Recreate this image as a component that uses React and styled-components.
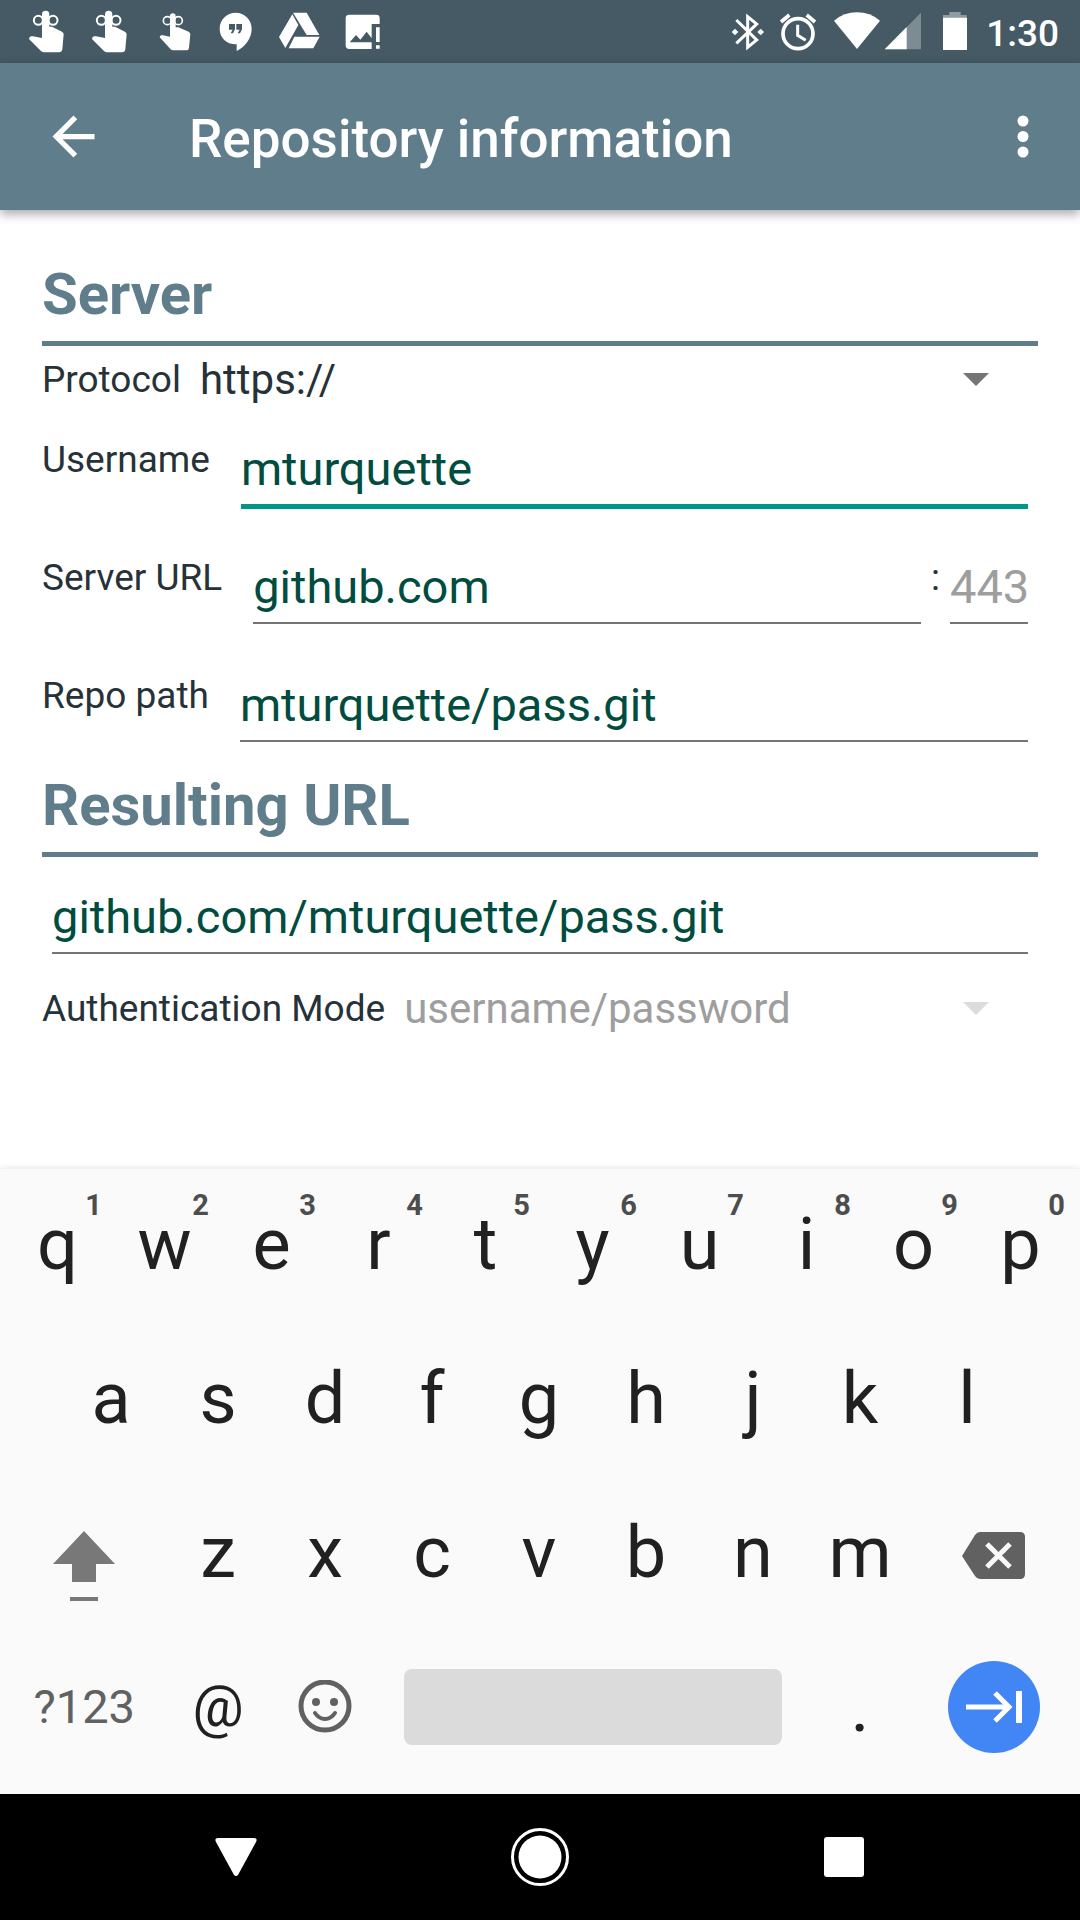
import React, { useState } from "react";
import styled, { createGlobalStyle, css } from "styled-components";

const color = {
  statusBar: "#455a64",
  primary: "#607d8b",
  text: "#263238",
  input: "#004d40",
  accent: "#009688",
  line: "#757575",
  hint: "#9e9e9e",
  key: "#212121",
  keyMuted: "#616161",
};

const GlobalStyle = createGlobalStyle`
  *, *::before, *::after { box-sizing: border-box; }
  body {
    margin: 0;
    background: #fff;
    font-family: Roboto, "Liberation Sans", sans-serif;
    color: ${color.text};
  }
  button, input, select { font: inherit; color: inherit; }
`;

const bareControl = css`
  margin: 0;
  padding: 0;
  border: 0;
  background: none;
  appearance: none;
`;

const Screen = styled.div`
  display: flex;
  flex-direction: column;
  min-height: 100vh;
`;

/* ---------- status bar ---------- */

const StatusBar = styled.header`
  display: flex;
  justify-content: space-between;
  height: 63px;
  padding: 0 21px 0 15px;
  background: ${color.statusBar};
  color: #fff;
`;

const StatusGroup = styled.div`
  display: flex;
  align-items: center;
`;

const Clock = styled.time`
  padding: 4px 0 0 7px;
  font-size: 37px;
  line-height: 44px;
  font-weight: 500;
`;

const StatusIcon = ({ x, w, children }) => (
  <svg
    width={w / 3}
    height="63"
    viewBox={`${x} 0 ${w} 189`}
    fill="currentColor"
    aria-hidden="true"
  >
    {children}
  </svg>
);

const ReminderHand = () => (
  <>
    <circle cx="115" cy="61" r="13.5" fill="none" stroke="currentColor" strokeWidth="6" />
    <circle cx="159" cy="61" r="13.5" fill="none" stroke="currentColor" strokeWidth="6" />
    <path d="M126 43a11 11 0 0 1 22 0v37h8l30 15q5 3 5 8l-4 45q-1 9-10 9h-45q-5 0-9-4L87 117q0-6 6-8 3-1 6 0l27 5z" />
  </>
);

/* ---------- app bar ---------- */

const AppBar = styled.div`
  display: flex;
  align-items: center;
  height: 147px;
  padding: 0 31px 0 42px;
  background: ${color.primary};
  color: #fff;
  box-shadow: 0 4px 10px rgba(0, 0, 0, 0.35);
`;

const BarButton = styled.button`
  ${bareControl}
  display: flex;
  flex: none;
`;

const Title = styled.h1`
  flex: 1;
  margin: 0;
  padding: 4px 0 0 84px;
  font-size: 53px;
  line-height: 62px;
  font-weight: 500;
`;

/* ---------- form ---------- */

const Form = styled.form`
  flex: 1;
  padding: 50px 42px;
`;

const SectionTitle = styled.h2`
  margin: 0;
  padding-bottom: 13px;
  border-bottom: 5px solid ${color.primary};
  font-size: 58px;
  line-height: 68px;
  font-weight: 700;
  color: ${color.primary};
`;

const Section = styled.section`
  & + & {
    margin-top: 29px;
  }
`;

const Label = styled.label`
  flex: none;
  font-size: 37px;
  line-height: 46px;
`;

const SelectRow = styled.div`
  display: flex;
  align-items: flex-start;
  gap: 19px;
  padding-top: 8px;

  ${Label} {
    padding-top: 3px;
  }
`;

const SelectBox = styled.div`
  display: flex;
  flex: 1;
  align-items: center;
  padding-right: 49px;
  color: ${(p) => (p.$disabled ? "#dcdcdc" : color.line)};
`;

const Select = styled.select`
  ${bareControl}
  flex: 1;
  min-width: 0;
  height: 50px;
  padding-top: 2px;
  font-size: 42px;
  line-height: 48px;
  color: ${color.text};
  outline: none;

  &:disabled {
    color: ${color.hint};
    opacity: 1;
  }
`;

const Fields = styled.div`
  display: flex;
  flex-direction: column;
  gap: 49px;
  padding-top: 33px;
`;

const FieldRow = styled.div`
  display: flex;
  align-items: flex-start;
  padding-right: 10px;
`;

const TextInput = styled.input`
  ${bareControl}
  flex: ${(p) => (p.$width ? "none" : "1")};
  width: ${(p) => (p.$width ? `${p.$width}px` : "auto")};
  min-width: 0;
  height: 69px;
  margin-left: ${(p) => p.$gap}px;
  padding: 3px 0 8px;
  border-bottom: 2px solid ${(p) => (p.$active ? color.accent : color.line)};
  box-shadow: ${(p) => (p.$active ? `0 3px 0 ${color.accent}` : "none")};
  font-size: 47px;
  line-height: 56px;
  color: ${color.input};
  outline: none;

  &::placeholder {
    color: ${color.hint};
    opacity: 1;
  }
`;

const Colon = styled.span`
  margin-left: 10px;
  font-size: 37px;
  line-height: 46px;
`;

const ResultRow = styled.div`
  display: flex;
  padding: 28px 10px 21px 0;
`;

const Arrow = () => (
  <svg width="26" height="13" viewBox="0 0 26 13" fill="currentColor" aria-hidden="true">
    <path d="M0 0h26L13 13z" />
  </svg>
);

/* ---------- keyboard ---------- */

const Keyboard = styled.section`
  padding: 2px 6px 7px 4px;
  background: #fafafa;
  color: ${color.key};
  box-shadow: 0 -1px 6px rgba(0, 0, 0, 0.1);
`;

const KeyRow = styled.div`
  display: flex;
  height: 154px;
  justify-content: center;
`;

const Key = styled.button`
  ${bareControl}
  position: relative;
  display: flex;
  flex: 0 0 ${(p) => p.$span || 10}%;
  align-items: center;
  justify-content: center;
  padding-bottom: 6px;
  font-size: ${(p) => p.$size || 72}px;
  line-height: 84px;
  color: ${(p) => (p.$muted ? color.keyMuted : color.key)};
`;

const Hint = styled.span`
  position: absolute;
  top: 17px;
  right: 9px;
  font-size: 29px;
  line-height: 34px;
  font-weight: 700;
  color: #4d4d4d;
`;

const SpaceBar = styled.span`
  width: 378px;
  height: 76px;
  border-radius: 8px;
  background: #dbdbdb;
`;

const NextCircle = styled.span`
  display: flex;
  align-items: center;
  justify-content: center;
  width: 92px;
  height: 92px;
  border-radius: 50%;
  background: #4285f4;
`;

/* ---------- navigation bar ---------- */

const NavBar = styled.nav`
  display: flex;
  align-items: center;
  justify-content: center;
  gap: 244px;
  height: 126px;
  background: #000;
  color: #fff;
`;

const topRow = ["q", "w", "e", "r", "t", "y", "u", "i", "o", "p"];
const homeRow = ["a", "s", "d", "f", "g", "h", "j", "k", "l"];
const bottomRow = ["z", "x", "c", "v", "b", "n", "m"];

export default function App() {
  const [username, setUsername] = useState("mturquette");
  const [server, setServer] = useState("github.com");
  const [path, setPath] = useState("mturquette/pass.git");
  const [port, setPort] = useState("");
  const [url, setUrl] = useState("github.com/mturquette/pass.git");

  return (
    <Screen>
      <GlobalStyle />
      <StatusBar>
        <StatusGroup>
          <StatusIcon x={45} w={189}>
            <ReminderHand />
          </StatusIcon>
          <StatusIcon x={45} w={189}>
            <ReminderHand />
          </StatusIcon>
          <StatusIcon x={423} w={189}>
            <circle cx="502" cy="62" r="12" fill="none" stroke="currentColor" strokeWidth="5" />
            <circle cx="535" cy="62" r="12" fill="none" stroke="currentColor" strokeWidth="5" />
            <path d="M510 48a8.500 8.500 0 0 1 17 0v34h8l31 13q5 3 5 8l-4 40q-1 8-9 8h-38q-5 0-8-3l-33-36q0-5 5-6h5l21 4z" />
          </StatusIcon>
          <StatusIcon x={612} w={189}>
            <path
              fillRule="evenodd"
              d="M707 38c27 0 48 21 48 48 0 30-20 54-45 67v-20c-30 1-51-20-51-47s21-48 48-48zM687 72v17h11l-6 11h7l6-12V72zm22 0v17h10l-6 11h7l6-12V72z"
            />
          </StatusIcon>
          <StatusIcon x={801} w={189}>
            <path d="M879 38h41l38 67h-38zM877 43l18 32-39 69-19-33zM883 110h76l-19 35h-74z" />
          </StatusIcon>
          <StatusIcon x={990} w={189}>
            <path
              fillRule="evenodd"
              d="M1048 44h81q10 0 10 10v18h-24v75h-67q-11 0-11-11V54q0-10 11-10zM1049 127h66v-12l-15-20-19 24-13-14z"
            />
            <path d="M1128 82h11v44h-11zM1128 136h11v10h-11z" />
          </StatusIcon>
        </StatusGroup>
        <StatusGroup>
          <StatusIcon x={69} w={150}>
            <g fill="none" stroke="currentColor" strokeWidth="9">
              <path d="M109 60l61 60-27 22V50l27 22-61 58" />
            </g>
            <path d="M95 96l10-10 10 10-10 10zM172 96l10-10 10 10-10 10z" />
          </StatusIcon>
          <StatusIcon x={219} w={150}>
            <g fill="none" stroke="currentColor">
              <circle cx="294" cy="101" r="45" strokeWidth="11" />
              <path d="M293 74v32l24 15" strokeWidth="9" />
              <path d="M243 66l25-21M345 66l-25-21" strokeWidth="11" />
            </g>
          </StatusIcon>
          <StatusIcon x={369} w={180}>
            <path d="M402 62q30-25 69-25t69 25l-69 85z" />
          </StatusIcon>
          <StatusIcon x={549} w={144}>
            <path d="M663 38v110H554z" opacity="0.3" />
            <path d="M620 81v67h-66z" />
          </StatusIcon>
          <StatusIcon x={693} w={144}>
            <path d="M748 36h34v9h18v8h-71v-8h19z" opacity="0.4" />
            <path d="M729 53h72v97h-72z" />
          </StatusIcon>
          <Clock>1:30</Clock>
        </StatusGroup>
      </StatusBar>

      <AppBar>
        <BarButton type="button" aria-label="Back">
          <svg width="63" height="63" viewBox="0 0 24 24" fill="#fff">
            <path d="M20 11H7.830l5.590-5.590L12 4l-8 8 8 8 1.410-1.410L7.830 13H20z" />
          </svg>
        </BarButton>
        <Title>Repository information</Title>
        <BarButton type="button" aria-label="More options">
          <svg width="52" height="63" viewBox="0 0 52 63" fill="#fff">
            <circle cx="26" cy="16" r="5.500" />
            <circle cx="26" cy="31.500" r="5.500" />
            <circle cx="26" cy="47" r="5.500" />
          </svg>
        </BarButton>
      </AppBar>

      <Form>
        <Section>
          <SectionTitle>Server</SectionTitle>
          <SelectRow>
            <Label htmlFor="protocol">Protocol</Label>
            <SelectBox>
              <Select id="protocol" defaultValue="https">
                <option value="https">https://</option>
                <option value="ssh">ssh://</option>
              </Select>
              <Arrow />
            </SelectBox>
          </SelectRow>
          <Fields>
            <FieldRow>
              <Label htmlFor="username">Username</Label>
              <TextInput
                id="username"
                $gap={31}
                $active
                value={username}
                onChange={(e) => setUsername(e.target.value)}
              />
            </FieldRow>
            <FieldRow>
              <Label htmlFor="server">Server URL</Label>
              <TextInput
                id="server"
                $gap={31}
                value={server}
                onChange={(e) => setServer(e.target.value)}
              />
              <Colon>:</Colon>
              <TextInput
                aria-label="Port"
                $gap={10}
                $width={78}
                placeholder="443"
                value={port}
                onChange={(e) => setPort(e.target.value)}
              />
            </FieldRow>
            <FieldRow>
              <Label htmlFor="path">Repo path</Label>
              <TextInput
                id="path"
                $gap={31}
                value={path}
                onChange={(e) => setPath(e.target.value)}
              />
            </FieldRow>
          </Fields>
        </Section>

        <Section>
          <SectionTitle id="result-title">Resulting URL</SectionTitle>
          <ResultRow>
            <TextInput
              aria-labelledby="result-title"
              $gap={10}
              value={url}
              onChange={(e) => setUrl(e.target.value)}
            />
          </ResultRow>
          <SelectRow>
            <Label htmlFor="auth">Authentication Mode</Label>
            <SelectBox $disabled>
              <Select id="auth" disabled defaultValue="password">
                <option value="password">username/password</option>
              </Select>
              <Arrow />
            </SelectBox>
          </SelectRow>
        </Section>
      </Form>

      <Keyboard aria-label="Keyboard">
        <KeyRow>
          {topRow.map((letter, i) => (
            <Key type="button" key={letter}>
              {letter}
              <Hint>{(i + 1) % 10}</Hint>
            </Key>
          ))}
        </KeyRow>
        <KeyRow>
          {homeRow.map((letter) => (
            <Key type="button" key={letter}>
              {letter}
            </Key>
          ))}
        </KeyRow>
        <KeyRow>
          <Key type="button" $span={15} aria-label="Shift">
            <svg width="64" height="100" viewBox="0 0 64 100" fill="#787878">
              <path d="M32 28l31 33H44v18H20V61H1zM18 94h28v4H18z" />
            </svg>
          </Key>
          {bottomRow.map((letter) => (
            <Key type="button" key={letter}>
              {letter}
            </Key>
          ))}
          <Key type="button" $span={15} aria-label="Delete">
            <svg width="64" height="56" viewBox="0 1 64 56">
              <path
                d="M18 8h40q5 0 5 5v37q0 5-5 5H18q-3 0-5-3L0 32l13-21q2-3 5-3z"
                fill="#616161"
              />
              <path d="M25 20l23 23M48 20L25 43" stroke="#fafafa" strokeWidth="5" />
            </svg>
          </Key>
        </KeyRow>
        <KeyRow>
          <Key type="button" $span={15} $size={47} $muted>
            ?123
          </Key>
          <Key type="button" $size={57}>
            @
          </Key>
          <Key type="button" $muted aria-label="Emoji">
            <svg width="54" height="54" viewBox="0 1 54 54" fill="currentColor">
              <circle cx="27" cy="27" r="24" fill="none" stroke="currentColor" strokeWidth="5" />
              <circle cx="18" cy="23" r="4" />
              <circle cx="36" cy="23" r="4" />
              <path
                d="M17 34q4 6 10 6t10-6"
                fill="none"
                stroke="currentColor"
                strokeWidth="4"
                strokeLinecap="round"
              />
            </svg>
          </Key>
          <Key type="button" $span={40} aria-label="Space">
            <SpaceBar />
          </Key>
          <Key type="button">.</Key>
          <Key type="button" $span={15} aria-label="Next">
            <NextCircle>
              <svg width="56" height="32" viewBox="0 0 56 32" fill="none" stroke="#fff">
                <path d="M0 16h44M29 2l14 14-14 14" strokeWidth="5" />
                <path d="M53 0v32" strokeWidth="6" />
              </svg>
            </NextCircle>
          </Key>
        </KeyRow>
      </Keyboard>

      <NavBar aria-label="System navigation">
        <BarButton type="button" aria-label="Hide keyboard">
          <svg width="60" height="60" viewBox="0 0 60 60" fill="#fff">
            <path d="M12 11h36q4 0 2 4L32 48q-2 2-4 0L10 15q-2-4 2-4z" />
          </svg>
        </BarButton>
        <BarButton type="button" aria-label="Home">
          <svg width="60" height="60" viewBox="0 0 60 60" fill="#fff">
            <circle cx="30" cy="30" r="27.500" fill="none" stroke="#fff" strokeWidth="3" />
            <circle cx="30" cy="30" r="21.500" />
          </svg>
        </BarButton>
        <BarButton type="button" aria-label="Recent apps">
          <svg width="60" height="60" viewBox="0 0 60 60" fill="#fff">
            <rect x="10" y="10" width="40" height="40" rx="3" />
          </svg>
        </BarButton>
      </NavBar>
    </Screen>
  );
}
